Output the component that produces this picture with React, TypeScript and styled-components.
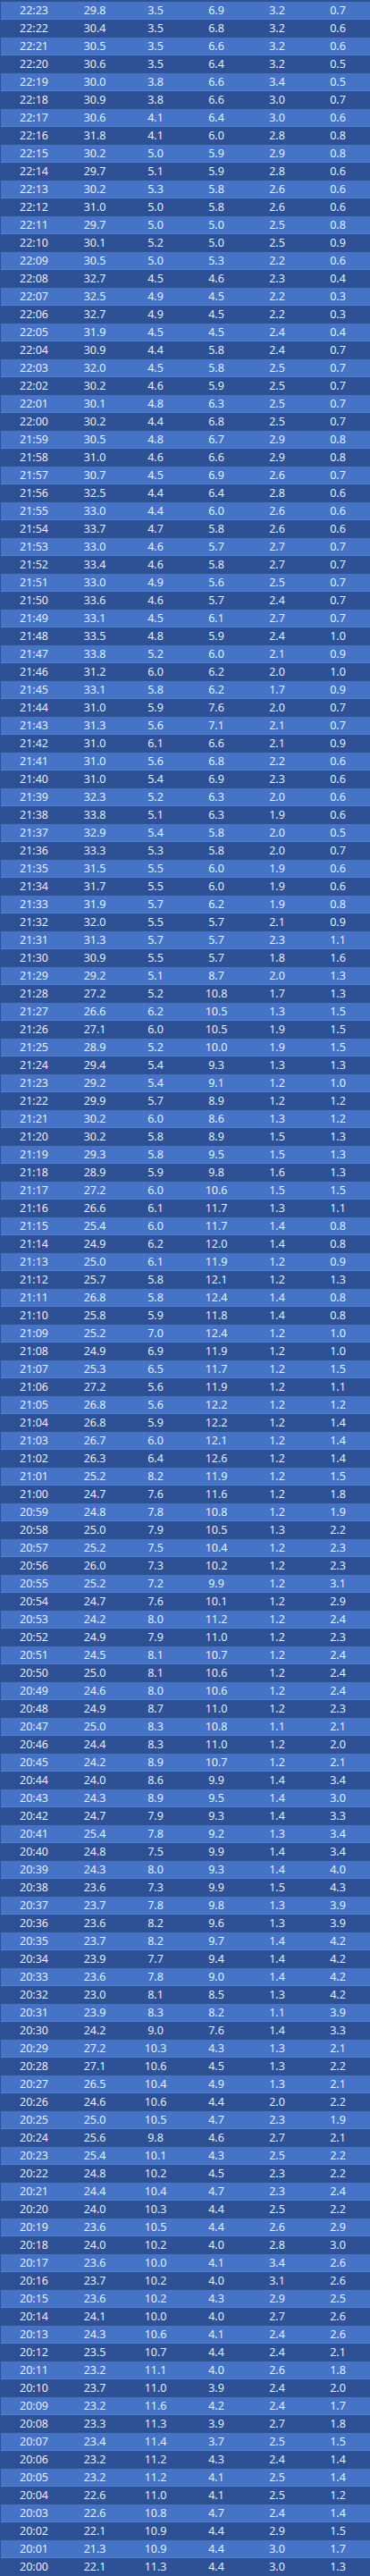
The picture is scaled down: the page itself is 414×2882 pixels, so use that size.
import React from "react";
import styled, { createGlobalStyle } from "styled-components";

const GlobalStyle = createGlobalStyle`
  html, body {
    margin: 0;
    padding: 0;
    background: #2d5194;
  }
  body {
    font-family: "Open Sans", Lato, "Liberation Sans", sans-serif;
  }
`;

const RAW = `22:23 29.8 3.5 6.9 3.2 0.7
22:22 30.4 3.5 6.8 3.2 0.6
22:21 30.5 3.5 6.6 3.2 0.6
22:20 30.6 3.5 6.4 3.2 0.5
22:19 30.0 3.8 6.6 3.4 0.5
22:18 30.9 3.8 6.6 3.0 0.7
22:17 30.6 4.1 6.4 3.0 0.6
22:16 31.8 4.1 6.0 2.8 0.8
22:15 30.2 5.0 5.9 2.9 0.8
22:14 29.7 5.1 5.9 2.8 0.6
22:13 30.2 5.3 5.8 2.6 0.6
22:12 31.0 5.0 5.8 2.6 0.6
22:11 29.7 5.0 5.0 2.5 0.8
22:10 30.1 5.2 5.0 2.5 0.9
22:09 30.5 5.0 5.3 2.2 0.6
22:08 32.7 4.5 4.6 2.3 0.4
22:07 32.5 4.9 4.5 2.2 0.3
22:06 32.7 4.9 4.5 2.2 0.3
22:05 31.9 4.5 4.5 2.4 0.4
22:04 30.9 4.4 5.8 2.4 0.7
22:03 32.0 4.5 5.8 2.5 0.7
22:02 30.2 4.6 5.9 2.5 0.7
22:01 30.1 4.8 6.3 2.5 0.7
22:00 30.2 4.4 6.8 2.5 0.7
21:59 30.5 4.8 6.7 2.9 0.8
21:58 31.0 4.6 6.6 2.9 0.8
21:57 30.7 4.5 6.9 2.6 0.7
21:56 32.5 4.4 6.4 2.8 0.6
21:55 33.0 4.4 6.0 2.6 0.6
21:54 33.7 4.7 5.8 2.6 0.6
21:53 33.0 4.6 5.7 2.7 0.7
21:52 33.4 4.6 5.8 2.7 0.7
21:51 33.0 4.9 5.6 2.5 0.7
21:50 33.6 4.6 5.7 2.4 0.7
21:49 33.1 4.5 6.1 2.7 0.7
21:48 33.5 4.8 5.9 2.4 1.0
21:47 33.8 5.2 6.0 2.1 0.9
21:46 31.2 6.0 6.2 2.0 1.0
21:45 33.1 5.8 6.2 1.7 0.9
21:44 31.0 5.9 7.6 2.0 0.7
21:43 31.3 5.6 7.1 2.1 0.7
21:42 31.0 6.1 6.6 2.1 0.9
21:41 31.0 5.6 6.8 2.2 0.6
21:40 31.0 5.4 6.9 2.3 0.6
21:39 32.3 5.2 6.3 2.0 0.6
21:38 33.8 5.1 6.3 1.9 0.6
21:37 32.9 5.4 5.8 2.0 0.5
21:36 33.3 5.3 5.8 2.0 0.7
21:35 31.5 5.5 6.0 1.9 0.6
21:34 31.7 5.5 6.0 1.9 0.6
21:33 31.9 5.7 6.2 1.9 0.8
21:32 32.0 5.5 5.7 2.1 0.9
21:31 31.3 5.7 5.7 2.3 1.1
21:30 30.9 5.5 5.7 1.8 1.6
21:29 29.2 5.1 8.7 2.0 1.3
21:28 27.2 5.2 10.8 1.7 1.3
21:27 26.6 6.2 10.5 1.3 1.5
21:26 27.1 6.0 10.5 1.9 1.5
21:25 28.9 5.2 10.0 1.9 1.5
21:24 29.4 5.4 9.3 1.3 1.3
21:23 29.2 5.4 9.1 1.2 1.0
21:22 29.9 5.7 8.9 1.2 1.2
21:21 30.2 6.0 8.6 1.3 1.2
21:20 30.2 5.8 8.9 1.5 1.3
21:19 29.3 5.8 9.5 1.5 1.3
21:18 28.9 5.9 9.8 1.6 1.3
21:17 27.2 6.0 10.6 1.5 1.5
21:16 26.6 6.1 11.7 1.3 1.1
21:15 25.4 6.0 11.7 1.4 0.8
21:14 24.9 6.2 12.0 1.4 0.8
21:13 25.0 6.1 11.9 1.2 0.9
21:12 25.7 5.8 12.1 1.2 1.3
21:11 26.8 5.8 12.4 1.4 0.8
21:10 25.8 5.9 11.8 1.4 0.8
21:09 25.2 7.0 12.4 1.2 1.0
21:08 24.9 6.9 11.9 1.2 1.0
21:07 25.3 6.5 11.7 1.2 1.5
21:06 27.2 5.6 11.9 1.2 1.1
21:05 26.8 5.6 12.2 1.2 1.2
21:04 26.8 5.9 12.2 1.2 1.4
21:03 26.7 6.0 12.1 1.2 1.4
21:02 26.3 6.4 12.6 1.2 1.4
21:01 25.2 8.2 11.9 1.2 1.5
21:00 24.7 7.6 11.6 1.2 1.8
20:59 24.8 7.8 10.8 1.2 1.9
20:58 25.0 7.9 10.5 1.3 2.2
20:57 25.2 7.5 10.4 1.2 2.3
20:56 26.0 7.3 10.2 1.2 2.3
20:55 25.2 7.2 9.9 1.2 3.1
20:54 24.7 7.6 10.1 1.2 2.9
20:53 24.2 8.0 11.2 1.2 2.4
20:52 24.9 7.9 11.0 1.2 2.3
20:51 24.5 8.1 10.7 1.2 2.4
20:50 25.0 8.1 10.6 1.2 2.4
20:49 24.6 8.0 10.6 1.2 2.4
20:48 24.9 8.7 11.0 1.2 2.3
20:47 25.0 8.3 10.8 1.1 2.1
20:46 24.4 8.3 11.0 1.2 2.0
20:45 24.2 8.9 10.7 1.2 2.1
20:44 24.0 8.6 9.9 1.4 3.4
20:43 24.3 8.9 9.5 1.4 3.0
20:42 24.7 7.9 9.3 1.4 3.3
20:41 25.4 7.8 9.2 1.3 3.4
20:40 24.8 7.5 9.9 1.4 3.4
20:39 24.3 8.0 9.3 1.4 4.0
20:38 23.6 7.3 9.9 1.5 4.3
20:37 23.7 7.8 9.8 1.3 3.9
20:36 23.6 8.2 9.6 1.3 3.9
20:35 23.7 8.2 9.7 1.4 4.2
20:34 23.9 7.7 9.4 1.4 4.2
20:33 23.6 7.8 9.0 1.4 4.2
20:32 23.0 8.1 8.5 1.3 4.2
20:31 23.9 8.3 8.2 1.1 3.9
20:30 24.2 9.0 7.6 1.4 3.3
20:29 27.2 10.3 4.3 1.3 2.1
20:28 27.1 10.6 4.5 1.3 2.2
20:27 26.5 10.4 4.9 1.3 2.1
20:26 24.6 10.6 4.4 2.0 2.2
20:25 25.0 10.5 4.7 2.3 1.9
20:24 25.6 9.8 4.6 2.7 2.1
20:23 25.4 10.1 4.3 2.5 2.2
20:22 24.8 10.2 4.5 2.3 2.2
20:21 24.4 10.4 4.7 2.3 2.4
20:20 24.0 10.3 4.4 2.5 2.2
20:19 23.6 10.5 4.4 2.6 2.9
20:18 24.0 10.2 4.0 2.8 3.0
20:17 23.6 10.0 4.1 3.4 2.6
20:16 23.7 10.2 4.0 3.1 2.6
20:15 23.6 10.2 4.3 2.9 2.5
20:14 24.1 10.0 4.0 2.7 2.6
20:13 24.3 10.6 4.1 2.4 2.6
20:12 23.5 10.7 4.4 2.4 2.1
20:11 23.2 11.1 4.0 2.6 1.8
20:10 23.7 11.0 3.9 2.4 2.0
20:09 23.2 11.6 4.2 2.4 1.7
20:08 23.3 11.3 3.9 2.7 1.8
20:07 23.4 11.4 3.7 2.5 1.5
20:06 23.2 11.2 4.3 2.4 1.4
20:05 23.2 11.2 4.1 2.5 1.4
20:04 22.6 11.0 4.1 2.5 1.2
20:03 22.6 10.8 4.7 2.4 1.4
20:02 22.1 10.9 4.4 2.9 1.5
20:01 21.3 10.9 4.4 3.0 1.7
20:00 22.1 11.3 4.4 3.0 1.3`;

const ROWS: string[][] = RAW.split("\n").map((line) => line.trim().split(/\s+/));

const Sheet = styled.div`
  width: 414px;
  padding-top: 2px;
  background: #2d5194;
`;

const Row = styled.div<{ $light: boolean }>`
  display: grid;
  grid-template-columns: repeat(6, 68px);
  align-items: center;
  height: 20px;
  margin-left: 1px;
  padding-left: 3px;
  background: ${(p) => (p.$light ? "#4574c6" : "#2d5194")};
  box-shadow: ${(p) => (p.$light ? "inset 0 -1px 0 #5283d2" : "none")};
`;

const Cell = styled.span`
  text-align: center;
  color: #f3f6fc;
  font-family: "Open Sans", Lato, "Liberation Sans", sans-serif;
  font-size: 12.5px;
  line-height: 20px;
  white-space: nowrap;
`;

export default function App() {
  return (
    <>
      <GlobalStyle />
      <Sheet>
        {ROWS.map((cells, i) => (
          <Row key={cells[0]} $light={i % 2 === 0}>
            {cells.map((c, j) => (
              <Cell key={j}>{c}</Cell>
            ))}
          </Row>
        ))}
      </Sheet>
    </>
  );
}
